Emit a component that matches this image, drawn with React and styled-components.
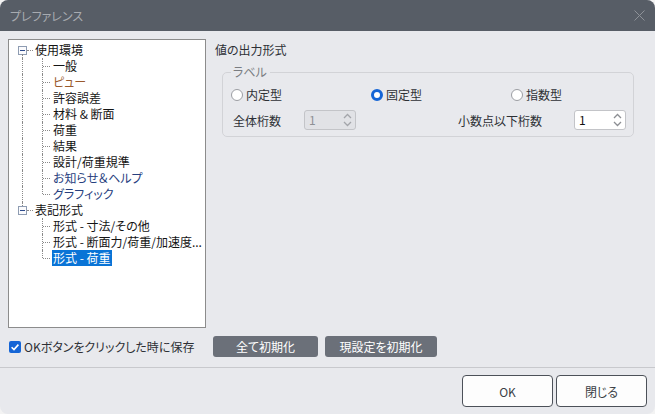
import React from 'react'
import styled, { createGlobalStyle, css } from 'styled-components'

const GlobalStyle = createGlobalStyle`
    html, body {
        margin: 0;
        padding: 0;
        background: #f3f3f3;
    }

    body {
        font-family: "Noto Sans CJK JP", "Noto Sans", sans-serif;
        font-size: 12px;
        font-feature-settings: "palt";
    }
`;

const Window = styled.div`
    width: 655px;
    height: 414px;
    display: flex;
    flex-direction: column;
    background: #e8e9ed;
    border-radius: 8px;
    overflow: hidden;
`;

const TitleBar = styled.div`
    height: 31px;
    flex: none;
    display: flex;
    align-items: center;
    justify-content: space-between;
    padding: 0 10px;
    background: #575d66;
    color: #a7abb0;
    font-size: 12px;
`;

const CloseIcon = () => (
    <svg width="11" height="11" viewBox="0 0 11 11">
        <path d="M0.5 0.5 L10.5 10.5 M10.5 0.5 L0.5 10.5" stroke="#8e9298" strokeWidth="1" fill="none" />
    </svg>
);

const Body = styled.div`
    flex: 1;
    display: flex;
    flex-direction: column;
    padding: 8px 8px 9px 8px;
`;

const Main = styled.div`
    display: grid;
    grid-template-columns: 198px 1fr;
    column-gap: 8px;
    height: 289px;
`;

/* ---------- tree ---------- */

const TreePane = styled.div`
    box-sizing: border-box;
    height: 289px;
    background: #ffffff;
    border: 1px solid #8c8c8c;
    padding-top: 2px;
    overflow: hidden;
    color: #141414;
`;

const dotted = css`
    content: '';
    position: absolute;
    border-color: #8a8a8a;
    border-style: dotted;
    border-width: 0;
`;

const RootRow = styled.div`
    position: relative;
    height: 16px;
    display: flex;
    align-items: center;
    padding-left: 9px;

    &::before {
        ${dotted};
        left: 13px;
        border-left-width: 1px;
        ${({ $first }) => $first ? css`top: 12px; height: 4px;` : css`top: 0; height: 4px;`}
    }
`;

const Expander = styled.span`
    box-sizing: border-box;
    width: 9px;
    height: 9px;
    border: 1px solid #8e9cb2;
    background: #fbfbfd;
    display: flex;
    align-items: center;
    justify-content: center;

    &::after {
        content: '';
        width: 5px;
        height: 1px;
        background: #2f4c8c;
    }
`;

const Stub = styled.span`
    width: 6px;
    height: 1px;
    border-top: 1px dotted #8a8a8a;
    margin-top: 1px;
`;

const ChildRow = styled.div`
    position: relative;
    height: 16px;
    display: flex;
    align-items: center;
    padding-left: 33px;

    ${({ $rail }) => $rail && css`
        &::before {
            ${dotted};
            left: 13px;
            top: 0;
            bottom: 0;
            border-left-width: 1px;
        }
    `}
`;

const Branch = styled.span`
    position: relative;
    width: 9px;
    align-self: stretch;

    &::before {
        ${dotted};
        left: 0;
        top: 0;
        height: ${({ $last }) => ($last ? '8px' : '16px')};
        border-left-width: 1px;
    }

    &::after {
        ${dotted};
        left: 1px;
        top: 8px;
        width: 7px;
        border-top-width: 1px;
    }
`;

const tones = {
    plain: '#141414',
    warm: '#9a5a2c',
    cool: '#27407e',
};

const NodeLabel = styled.span`
    line-height: 16px;
    height: 16px;
    padding: 0 1px;
    margin-left: 1px;
    white-space: nowrap;
    color: ${({ $tone }) => tones[$tone || 'plain']};

    ${({ $selected }) => $selected && css`
        background: #0a74d6;
        color: #ffffff;
    `}
`;

const treeData = [
    {
        label: '使用環境',
        children: [
            { label: '一般' },
            { label: 'ピュー', tone: 'warm' },
            { label: '許容誤差' },
            { label: '材料 & 断面' },
            { label: '荷重' },
            { label: '結果' },
            { label: '設計/荷重規準' },
            { label: 'お知らせ＆ヘルプ', tone: 'cool' },
            { label: 'グラフィック', tone: 'cool' },
        ],
    },
    {
        label: '表記形式',
        children: [
            { label: '形式 - 寸法/その他' },
            { label: '形式 - 断面力/荷重/加速度...' },
            { label: '形式 - 荷重', selected: true },
        ],
    },
];

const Tree = () => (
    <TreePane>
        {treeData.map((group, gi) => {
            const lastGroup = gi === treeData.length - 1;
            return (
                <React.Fragment key={group.label}>
                    <RootRow $first={gi === 0}>
                        <Expander />
                        <Stub />
                        <NodeLabel>{group.label}</NodeLabel>
                    </RootRow>
                    {group.children.map((item, i) => (
                        <ChildRow key={item.label} $rail={!lastGroup}>
                            <Branch $last={i === group.children.length - 1} />
                            <NodeLabel $tone={item.tone} $selected={item.selected}>{item.label}</NodeLabel>
                        </ChildRow>
                    ))}
                </React.Fragment>
            );
        })}
    </TreePane>
);

/* ---------- settings panel ---------- */

const Panel = styled.div`
    display: flex;
    flex-direction: column;
    color: #2d3035;
`;

const SectionTitle = styled.div`
    line-height: 18px;
    padding: 2px 0 0 1px;
`;

const Group = styled.div`
    position: relative;
    margin: 13px 13px 0 8px;
    border: 1px solid #d2d3d7;
    border-radius: 5px;
    padding: 14px 7px 6px 8px;
    display: flex;
    flex-direction: column;
    gap: 7px;
`;

const Legend = styled.span`
    position: absolute;
    top: -9px;
    left: 8px;
    padding: 0 3px 0 2px;
    line-height: 16px;
    background: #e8e9ed;
    color: #7a7d82;
`;

const RadioRow = styled.div`
    display: grid;
    grid-template-columns: 140px 140px 1fr;
    height: 16px;
`;

const RadioItem = styled.label`
    display: flex;
    align-items: center;
    gap: 3px;
    line-height: 16px;
`;

const RadioDot = styled.span`
    box-sizing: border-box;
    width: 12px;
    height: 12px;
    border-radius: 50%;
    background: #ffffff;
    border: 1px solid #9c9ea3;

    ${({ $checked }) => $checked && css`
        border: 3.5px solid #1565d6;
    `}
`;

const FieldRow = styled.div`
    display: flex;
    justify-content: space-between;
    align-items: center;
    height: 20px;
`;

const Field = styled.div`
    display: flex;
    align-items: center;
`;

const FieldLabel = styled.span`
    width: ${({ $width }) => $width}px;
    padding-left: ${({ $pad }) => $pad || 0}px;
    white-space: nowrap;
`;

const Spin = styled.div`
    box-sizing: border-box;
    width: 52px;
    height: 20px;
    border: 1px solid #c3c4c8;
    border-radius: 3px;
    display: flex;
    align-items: center;
    justify-content: space-between;
    padding: 0 3px 0 4px;
    background: ${({ $disabled }) => ($disabled ? '#e1e2e6' : '#ffffff')};
    color: ${({ $disabled }) => ($disabled ? '#8e9095' : '#101010')};
    line-height: 18px;
`;

const SpinArrows = ({ color }) => (
    <svg width="9" height="16" viewBox="0 0 9 16">
        <path d="M1 6 L4.5 2.5 L8 6" fill="none" stroke={color} strokeWidth="1.3" />
        <path d="M1 10 L4.5 13.5 L8 10" fill="none" stroke={color} strokeWidth="1.3" />
    </svg>
);

const Settings = () => (
    <Panel>
        <SectionTitle>値の出力形式</SectionTitle>
        <Group>
            <Legend>ラベル</Legend>
            <RadioRow>
                <RadioItem><RadioDot />内定型</RadioItem>
                <RadioItem><RadioDot $checked />固定型</RadioItem>
                <RadioItem><RadioDot />指数型</RadioItem>
            </RadioRow>
            <FieldRow>
                <Field>
                    <FieldLabel $width={71} $pad={2}>全体桁数</FieldLabel>
                    <Spin $disabled>1<SpinArrows color="#a3a5aa" /></Spin>
                </Field>
                <Field>
                    <FieldLabel $width={116} $pad={0}>小数点以下桁数</FieldLabel>
                    <Spin>1<SpinArrows color="#8c8e93" /></Spin>
                </Field>
            </FieldRow>
        </Group>
    </Panel>
);

/* ---------- bottom actions ---------- */

const ActionRow = styled.div`
    display: grid;
    grid-template-columns: 205px 1fr;
    align-items: center;
    margin-top: 8px;
    height: 21px;
`;

const CheckLabel = styled.label`
    display: flex;
    align-items: center;
    gap: 3px;
    padding-left: 1px;
    color: #2d3035;
    white-space: nowrap;
`;

const CheckBox = () => (
    <svg width="12" height="12" viewBox="0 0 12 12">
        <rect x="0" y="0" width="12" height="12" rx="2" fill="#1565d6" />
        <path d="M2.6 6.2 L5 8.6 L9.4 3.6" fill="none" stroke="#ffffff" strokeWidth="1.6" />
    </svg>
);

const ButtonGroup = styled.div`
    display: flex;
    gap: 7px;
`;

const DarkButton = styled.button`
    width: ${({ $width }) => $width}px;
    height: 21px;
    border: none;
    border-radius: 3px;
    background: #6b7079;
    color: #ffffff;
    font: inherit;
    font-size: 12px;
    padding: 0;
    cursor: pointer;
`;

const Footer = styled.div`
    height: 47px;
    flex: none;
    box-sizing: border-box;
    border-top: 1px solid #c8c9cd;
    display: flex;
    justify-content: flex-end;
    gap: 3px;
    padding: 7px 8px 0 0;
`;

const DialogButton = styled.button`
    width: 91px;
    height: 32px;
    border: 1px solid #4c5159;
    border-radius: 4px;
    background: #fdfdfd;
    color: #3b3f46;
    font: inherit;
    font-size: 12px;
    padding: 0;
    cursor: pointer;
`;

export default function App() {
    return (
        <>
            <GlobalStyle />
            <Window>
                <TitleBar>
                    <span>プレファレンス</span>
                    <CloseIcon />
                </TitleBar>
                <Body>
                    <Main>
                        <Tree />
                        <Settings />
                    </Main>
                    <ActionRow>
                        <CheckLabel><CheckBox />OKボタンをクリックした時に保存</CheckLabel>
                        <ButtonGroup>
                            <DarkButton $width={105}>全て初期化</DarkButton>
                            <DarkButton $width={112}>現設定を初期化</DarkButton>
                        </ButtonGroup>
                    </ActionRow>
                </Body>
                <Footer>
                    <DialogButton>OK</DialogButton>
                    <DialogButton>閉じる</DialogButton>
                </Footer>
            </Window>
        </>
    );
}
